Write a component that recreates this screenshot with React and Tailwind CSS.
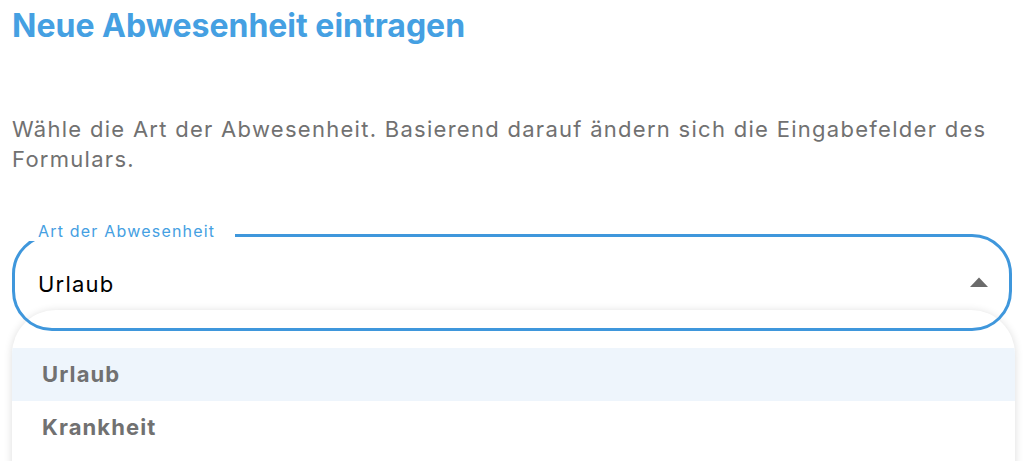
import React from 'react';

const options = ['Urlaub', 'Krankheit'];

export default function App() {
  return (
    <div className="h-[461px] overflow-hidden bg-white px-[12px] font-['Inter','Liberation_Sans',sans-serif]">
      <h1 className="pt-[6px] text-[32px] font-bold leading-[40px] text-[#45a0e2]">
        Neue Abwesenheit eintragen
      </h1>

      <p className="mt-[68px] text-[22px] leading-[30px] tracking-[1.28px] text-[#717171]">
        Wähle die Art der Abwesenheit. Basierend darauf ändern sich die Eingabefelder des Formulars.
      </p>

      <div className="relative mt-[60px]">
        {/* open dropdown, lies under the field border */}
        <div className="absolute left-0 right-[-3px] top-[76px] z-0 h-[200px] overflow-hidden rounded-[44px] bg-white pt-[38px] shadow-[0_1px_9px_rgba(0,0,0,0.14)]">
          {options.map((opt, i) => (
            <div
              key={opt}
              className={`flex h-[53px] items-center px-[30px] text-[22px] font-bold tracking-[1.1px] text-[#717171] ${i === 0 ? 'bg-[#eef5fc]' : ''}`}
            >
              {opt}
            </div>
          ))}
        </div>

        <div className="relative z-10 flex h-[97px] items-center justify-between rounded-[40px] border-[3px] border-[#3f97dc] pl-[23px] pr-[21px] pt-[3px]">
          <span className="absolute left-[13px] top-[-16px] bg-white pl-[10px] pr-[20px] text-[16px] leading-[20px] tracking-[1.2px] text-[#45a0e2]">
            Art der Abwesenheit
          </span>
          <span className="text-[22px] leading-[30px] tracking-[1.2px] text-black">Urlaub</span>
          <svg width="18" height="10" viewBox="0 0 18 10" className="mt-[-4px]">
            <path d="M9 0.5 L18 10 L0 10 Z" fill="#6b6b6b" />
          </svg>
        </div>
      </div>
    </div>
  );
}
